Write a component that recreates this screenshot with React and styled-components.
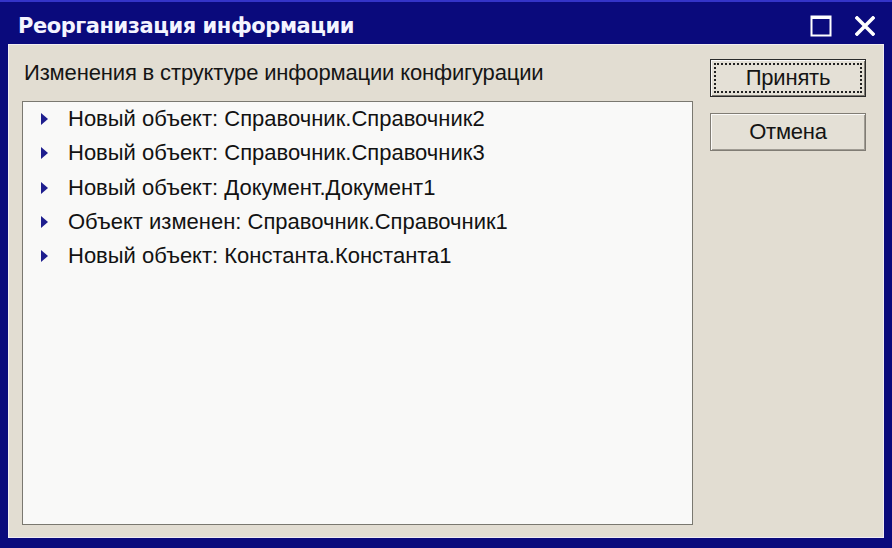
import React from "react";
import styled, { createGlobalStyle } from "styled-components";

const GlobalStyle = createGlobalStyle`
  html, body {
    margin: 0;
    padding: 0;
    background: #0a0a7c;
  }
  body {
    font-family: "Liberation Sans", Arial, sans-serif;
  }
`;

const items = [
  "Новый объект: Справочник.Справочник2",
  "Новый объект: Справочник.Справочник3",
  "Новый объект: Документ.Документ1",
  "Объект изменен: Справочник.Справочник1",
  "Новый объект: Константа.Константа1",
];

export default function App() {
  return (
    <>
      <GlobalStyle />
      <Window>
        <TitleBar>
          <Title>Реорганизация информации</Title>
          <TitleButtons>
            <svg width="22" height="22" viewBox="0 0 22 22">
              <rect x="1.5" y="1.5" width="19" height="19" fill="none" stroke="#fff" strokeWidth="2" />
              <rect x="1" y="1" width="20" height="3" fill="#fff" />
            </svg>
            <svg width="20" height="20" viewBox="0 0 20 20">
              <path d="M2 2 L18 18 M18 2 L2 18" stroke="#fff" strokeWidth="3.6" strokeLinecap="square" />
            </svg>
          </TitleButtons>
        </TitleBar>
        <Client>
          <Main>
            <Label>Изменения в структуре информации конфигурации</Label>
            <ListBox>
              {items.map((text) => (
                <Row key={text}>
                  <Arrow />
                  <RowText>{text}</RowText>
                </Row>
              ))}
            </ListBox>
          </Main>
          <Side>
            <Button $default>
              <Focus>Принять</Focus>
            </Button>
            <Button>Отмена</Button>
          </Side>
        </Client>
      </Window>
    </>
  );
}

const Window = styled.div`
  width: 892px;
  height: 548px;
  box-sizing: border-box;
  background: #0a0a7c;
  border-top: 2px solid #3434c8;
  padding: 0 8px 10px 8px;
  display: flex;
  flex-direction: column;
`;

const TitleBar = styled.div`
  height: 42px;
  display: flex;
  align-items: center;
  justify-content: space-between;
  padding: 5px 9px 0 10px;
  box-sizing: border-box;
`;

const Title = styled.div`
  color: #f4f4ff;
  font-family: "DejaVu Sans", Verdana, sans-serif;
  font-weight: bold;
  font-size: 21px;
  letter-spacing: -0.45px;
`;

const TitleButtons = styled.div`
  display: flex;
  align-items: center;
  gap: 23px;
`;

const Client = styled.div`
  flex: 1;
  background: #e2ddd2;
  border-top: 1px solid #f2eef0;
  border-left: 1px solid #f2eef0;
  border-right: 1px solid #f0ecf4;
  border-bottom: 1px solid #f0ecf4;
  display: flex;
  padding: 14px 17px 12px 13px;
  gap: 17px;
`;

const Main = styled.div`
  flex: 1;
  display: flex;
  flex-direction: column;
`;

const Label = styled.div`
  font-size: 22px;
  letter-spacing: -0.15px;
  color: #151515;
  height: 42px;
  padding-left: 2px;
  padding-top: 1px;
  box-sizing: border-box;
`;

const ListBox = styled.div`
  flex: 1;
  background: #f9f9f8;
  border: 1px solid #7a7870;
`;

const Row = styled.div`
  height: 34.3px;
  display: flex;
  align-items: center;
  padding-left: 17px;
`;

const Arrow = styled.span`
  width: 0;
  height: 0;
  border-top: 6px solid transparent;
  border-bottom: 6px solid transparent;
  border-left: 7px solid #1e1e8e;
  margin-left: 1px;
  margin-right: 20px;
`;

const RowText = styled.span`
  font-size: 22px;
  color: #121212;
`;

const Side = styled.div`
  width: 156px;
  display: flex;
  flex-direction: column;
  gap: 16px;
`;

const Button = styled.div`
  height: 38px;
  box-sizing: border-box;
  background: #e4e0d6;
  border: 1px solid ${(p) => (p.$default ? "#2a2a2a" : "#807c74")};
  box-shadow: ${(p) =>
    p.$default
      ? "inset 1px 1px 0 #fafafa, inset -1px -1px 0 #7c7870"
      : "inset 1px 1px 0 #fbfaf8, inset -1px -1px 0 #a09c94"};
  display: flex;
  align-items: center;
  justify-content: center;
  padding: 3px;
  font-size: 22px;
  letter-spacing: -0.2px;
  color: #141414;
`;

const Focus = styled.span`
  flex: 1;
  align-self: stretch;
  display: flex;
  align-items: center;
  justify-content: center;
  border: 2px dotted #222;
`;
